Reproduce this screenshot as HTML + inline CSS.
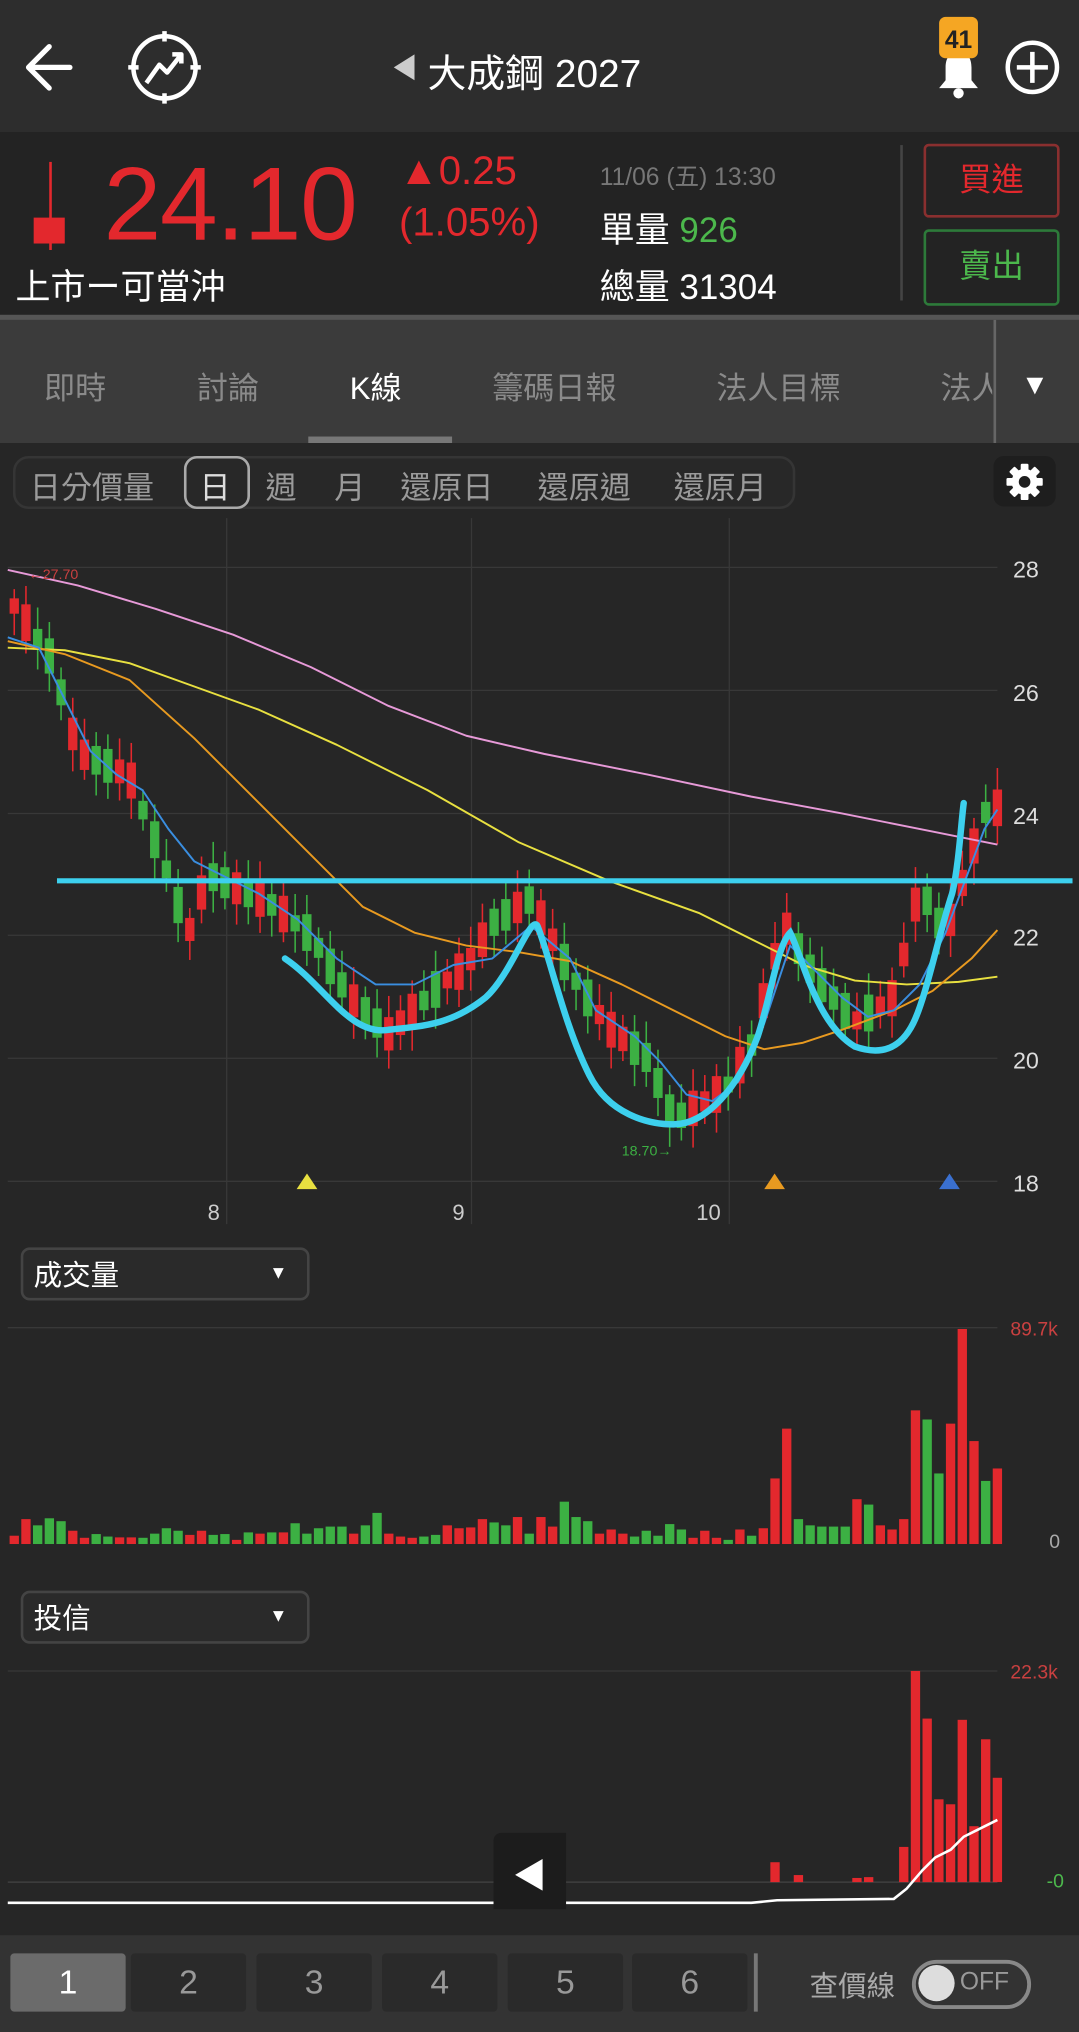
<!DOCTYPE html>
<html><head><meta charset="utf-8">
<style>
html,body{margin:0;padding:0;background:#262626;overflow:hidden;}
body{width:1079px;height:2032px;}
#w{position:absolute;left:0;top:0;width:833px;height:1569px;transform:scale(1.29532);transform-origin:0 0;background:#262626;font-family:"Liberation Sans","Noto Sans CJK TC",sans-serif;color:#fff;}
.a{position:absolute;}
.tab{position:absolute;top:280px;font-size:24px;color:#8a8a8a;}
.sub{position:absolute;top:357px;font-size:24px;color:#9a9a9a;}
.nb{position:absolute;top:1508px;width:89px;height:45px;background:#2a2a2a;border-radius:3px;color:#999;font-size:26px;text-align:center;line-height:45px;}
</style></head><body><div id="w">
<div class="a" style="left:0;top:0;width:833px;height:102px;background:#2d2d2d"></div>
<svg class="a" style="left:0;top:0" width="833" height="102">
<path d="M54 52H22M38 36L22 52L38 68" stroke="#fff" stroke-width="4" fill="none" stroke-linecap="round" stroke-linejoin="round"/>
<circle cx="127" cy="52" r="24" stroke="#fff" stroke-width="3.5" fill="none"/>
<path d="M127 24v8M127 72v8M99 52h8M147 52h8" stroke="#fff" stroke-width="3.5"/>
<path d="M113 64L123 50L129 56L140 42M133 42h7v7" stroke="#fff" stroke-width="3.5" fill="none" stroke-linejoin="round"/>
<path d="M320 42L304 52L320 62Z" fill="#ccc"/>
<path d="M740 40c-7 0-10 5-10 12v10l-5 6h30l-5-6V52c0-7-3-12-10-12z" fill="#fff"/>
<circle cx="740" cy="72" r="4" fill="#fff"/>
<rect x="725" y="13" width="30" height="32" rx="5" fill="#f5a623"/>
<text x="740" y="37" font-size="19" font-weight="bold" text-anchor="middle" fill="#222" font-family="Liberation Sans">41</text>
<circle cx="797" cy="52" r="19" stroke="#fff" stroke-width="3.5" fill="none"/>
<path d="M797 40v24M785 52h24" stroke="#fff" stroke-width="3.5"/>
</svg>
<div class="a" style="left:330px;top:32px;font-size:30px;">大成鋼 2027</div>
<div class="a" style="left:0;top:102px;width:833px;height:142px;background:#232323"></div>
<div class="a" style="left:0;top:243px;width:833px;height:4px;background:#555"></div>
<div class="a" style="left:38px;top:125px;width:2px;height:68px;background:#e3282d"></div>
<div class="a" style="left:26px;top:168px;width:24px;height:20px;background:#e3282d"></div>
<div class="a" style="left:80px;top:112px;font-size:80px;color:#e3282d;letter-spacing:-1px">24.10</div>
<div class="a" style="left:308px;top:114px;font-size:31px;color:#e3282d">▲0.25</div>
<div class="a" style="left:308px;top:154px;font-size:31px;color:#e3282d">(1.05%)</div>
<div class="a" style="left:12px;top:200px;font-size:27px;">上市ー可當沖</div>
<div class="a" style="left:463px;top:122px;font-size:19px;color:#777">11/06 (五) 13:30</div>
<div class="a" style="left:463px;top:156px;font-size:27px;">單量 <span style="color:#4cb84c">926</span></div>
<div class="a" style="left:463px;top:200px;font-size:27px;">總量 31304</div>
<div class="a" style="left:695px;top:112px;width:2px;height:120px;background:#444"></div>
<div class="a" style="left:713px;top:111px;width:101px;height:53px;border:2px solid #8a2f2f;border-radius:4px;color:#e3282d;font-size:25px;text-align:center;line-height:53px">買進</div>
<div class="a" style="left:713px;top:177px;width:101px;height:55px;border:2px solid #2d7a3a;border-radius:4px;color:#4cb84c;font-size:25px;text-align:center;line-height:55px">賣出</div>
<div class="a" style="left:0;top:247px;width:833px;height:95px;background:#3b3b3b"></div>
<div class="tab" style="left:34px">即時</div>
<div class="tab" style="left:152px">討論</div>
<div class="tab" style="left:270px;color:#fff">K線</div>
<div class="tab" style="left:380px">籌碼日報</div>
<div class="tab" style="left:553px">法人目標</div>
<div class="tab" style="left:726px;width:40px;overflow:hidden;white-space:nowrap">法人</div>
<div class="a" style="left:767px;top:247px;width:2px;height:95px;background:#666"></div>
<div class="a" style="left:788px;top:284px;font-size:22px;color:#fff">▼</div>
<div class="a" style="left:238px;top:337px;width:111px;height:5px;background:#777"></div>
<div class="a" style="left:10px;top:352px;width:600px;height:37px;border:2px solid #353535;border-radius:12px;background:#282828"></div>
<div class="a" style="left:142px;top:352px;width:47px;height:37px;border:2px solid #aaa;border-radius:10px"></div>
<div class="sub" style="left:23px">日分價量</div>
<div class="sub" style="left:154px;color:#ddd">日</div>
<div class="sub" style="left:205px">週</div>
<div class="sub" style="left:258px">月</div>
<div class="sub" style="left:309px">還原日</div>
<div class="sub" style="left:415px">還原週</div>
<div class="sub" style="left:520px">還原月</div>
<div class="a" style="left:767px;top:352px;width:48px;height:39px;background:#1e1e1e;border-radius:8px"></div>
<svg class="a" style="left:776px;top:357px" width="30" height="30" viewBox="0 0 30 30"><g fill="#fff"><circle cx="15" cy="15" r="10"/><g id="t"><rect x="12" y="1" width="6" height="28" rx="1"/></g><use href="#t" transform="rotate(45 15 15)"/><use href="#t" transform="rotate(90 15 15)"/><use href="#t" transform="rotate(135 15 15)"/></g><circle cx="15" cy="15" r="4.5" fill="#1e1e1e"/></svg>

<svg id="ch" class="a" style="left:0;top:0" width="833" height="1569"></svg>

<div class="a" style="left:16px;top:963px;width:219px;height:37px;border:2px solid #444;border-radius:7px;background:#2a2a2a"></div>
<div class="a" style="left:26px;top:967px;font-size:22px">成交量</div>
<div class="a" style="left:208px;top:974px;font-size:14px">▼</div>
<div class="a" style="left:16px;top:1228px;width:219px;height:37px;border:2px solid #444;border-radius:7px;background:#2a2a2a"></div>
<div class="a" style="left:26px;top:1232px;font-size:22px">投信</div>
<div class="a" style="left:208px;top:1239px;font-size:14px">▼</div>
<div class="a" style="left:780px;top:1018px;font-size:15px;color:#c94040">89.7k</div>
<div class="a" style="left:810px;top:1182px;font-size:15px;color:#aaa">0</div>
<div class="a" style="left:780px;top:1283px;font-size:15px;color:#c94040">22.3k</div>
<div class="a" style="left:808px;top:1444px;font-size:15px;color:#4cb84c">-0</div>
<div class="a" style="left:381px;top:1415px;width:56px;height:59px;background:#1c1c1c;border-radius:6px 0 0 0"></div>
<div class="a" style="left:396px;top:1428px;font-size:26px">◀</div>
<div class="a" style="left:0;top:1494px;width:833px;height:75px;background:#333"></div>
<div class="nb" style="left:8px;background:#6b6b6b;color:#fff">1</div>
<div class="nb" style="left:101px">2</div>
<div class="nb" style="left:198px">3</div>
<div class="nb" style="left:295px">4</div>
<div class="nb" style="left:392px">5</div>
<div class="nb" style="left:488px">6</div>
<div class="a" style="left:582px;top:1508px;width:3px;height:45px;background:#777"></div>
<div class="a" style="left:625px;top:1516px;font-size:22px;color:#aaa">查價線</div>
<div class="a" style="left:704px;top:1513px;width:86px;height:32px;border:3px solid #888;border-radius:20px"></div>
<div class="a" style="left:709px;top:1517px;width:28px;height:28px;border-radius:50%;background:#ddd"></div>
<div class="a" style="left:741px;top:1520px;font-size:19px;color:#999">OFF</div>
</div>
<script>
var s='',ch=document.getElementById('ch');
function L(x1,y1,x2,y2,c,w){s+='<line x1="'+x1+'" y1="'+y1+'" x2="'+x2+'" y2="'+y2+'" stroke="'+c+'" stroke-width="'+(w||1)+'"/>';}
function R(x,y,w,h,c){s+='<rect x="'+x+'" y="'+y+'" width="'+w+'" height="'+h+'" fill="'+c+'"/>';}
function T(x,y,t,c,sz,a){s+='<text x="'+x+'" y="'+y+'" fill="'+c+'" font-size="'+sz+'" text-anchor="'+(a||'start')+'" font-family="Liberation Sans">'+t+'</text>';}
[438,533,628,722,817,912].forEach(function(y,i){L(6,y,770,y,'#383838');T(782,y+8,28-2*i,'#ddd',18);});
[175,364,563].forEach(function(x){L(x,400,x,945,'#383838');});
T(165,942,'8','#ccc',17,'middle');T(354,942,'9','#ccc',17,'middle');T(547,942,'10','#ccc',17,'middle');
L(6,1025,770,1025,'#383838');L(6,1290,770,1290,'#383838');L(6,1453,770,1453,'#444');
function py(p){return 438+(28-p)*47.4;}
var kp=[[10,27.4],[40,26.5],[60,25],[100,24.6],[130,23],[145,22],[160,23],[210,22.5],[240,22],[270,21],[300,20.4],[340,21.2],[360,21.5],[380,22.2],[410,22.6],[440,21.4],[470,20.5],[500,20],[520,19],[560,19.5],[580,20.2],[605,22.2],[630,21.3],[660,20.6],[690,21],[710,22.8],[730,22],[760,24],[772,24.1]];
function ip(x){for(var i=1;i<kp.length;i++)if(x<=kp[i][0]){var a=kp[i-1],b=kp[i];return a[1]+(b[1]-a[1])*(x-a[0])/(b[0]-a[0]);}return 24.1;}
var vol=[[20,'r'],[60,'r'],[45,'g'],[62,'g'],[55,'g'],[32,'r'],[15,'r'],[24,'g'],[18,'g'],[16,'r'],[16,'r'],[15,'g'],[25,'g'],[38,'g'],[32,'g'],[22,'r'],[32,'r'],[22,'g'],[24,'g'],[10,'r'],[28,'g'],[25,'r'],[28,'g'],[28,'r'],[50,'g'],[25,'g'],[38,'g'],[42,'g'],[42,'g'],[25,'r'],[45,'g'],[75,'g'],[25,'r'],[18,'r'],[15,'r'],[18,'g'],[22,'g'],[45,'r'],[38,'r'],[40,'r'],[60,'r'],[52,'g'],[45,'g'],[65,'r'],[25,'g'],[65,'r'],[42,'r'],[102,'g'],[65,'g'],[55,'g'],[25,'r'],[35,'r'],[25,'r'],[18,'g'],[32,'g'],[20,'g'],[48,'g'],[35,'g'],[15,'r'],[32,'r'],[15,'r'],[10,'g'],[35,'r'],[20,'g'],[38,'r'],[158,'r'],[278,'r'],[60,'g'],[45,'g'],[42,'g'],[42,'g'],[42,'g'],[108,'r'],[95,'g'],[45,'r'],[35,'r'],[60,'r'],[322,'r'],[300,'g'],[170,'g'],[290,'r'],[518,'r'],[248,'r'],[152,'g'],[182,'r']];
var n=vol.length,st=(770-11)/(n-1);
var tx={65:48,67:17,72:10,73:12,76:85,77:510,78:395,79:200,80:188,81:392,82:135,83:345,84:252};
for(var i=0;i<n;i++){
 var x=11+i*st,c=vol[i][1]=='r'?'#e3282d':'#3cb043';
 var h=vol[i][0]/518*166;R(x-3.6,1192-h,7.2,h,c);
 if(tx[i]){var hh=tx[i]/510*163;R(x-3.6,1453-hh,7.2,hh,'#e3282d');}
 var p=ip(x),d=0.25+0.35*Math.abs(Math.sin(i*1.7)),o,cl;
 if(c=='#e3282d'){o=p-d/2;cl=p+d/2;}else{o=p+d/2;cl=p-d/2;}
 var hi=Math.max(o,cl)+0.15+0.2*Math.abs(Math.sin(i*2.3)),lo=Math.min(o,cl)-0.15-0.2*Math.abs(Math.cos(i*1.3));
 L(x,py(hi),x,py(lo),c,1.2);var yt=py(Math.max(o,cl));R(x-3.6,yt,7.2,Math.max(2,py(Math.min(o,cl))-yt),c);
}
function P(pts,c,w){s+='<polyline points="'+pts+'" fill="none" stroke="'+c+'" stroke-width="'+(w||1.5)+'" stroke-linejoin="round"/>';}
P('6,440 60,452 120,470 180,490 240,515 300,545 360,568 420,582 500,598 580,615 650,628 720,642 770,652','#e79ad8');
P('6,500 50,502 100,512 150,530 200,548 260,575 330,610 400,650 470,680 540,705 580,725 620,745 660,757 700,760 740,758 770,754','#e8e040');
P('6,495 50,505 100,525 150,570 200,620 240,660 280,700 320,720 360,730 400,735 440,742 480,760 520,780 560,800 590,810 620,805 650,795 690,780 720,765 750,740 770,718','#e89a20');
P('6,492 30,500 50,540 70,580 90,598 110,610 130,640 150,665 170,675 200,690 230,710 260,740 290,760 320,760 350,745 380,740 410,715 440,740 460,780 490,800 510,820 530,845 550,850 570,835 590,790 610,730 630,750 650,770 670,785 690,780 710,760 730,720 760,640 770,625','#3a8ee0');
L(44,680,828,680,'#3dd0ee',4);
s+='<path d="M220 740C250 760 270 800 300 795C330 792 350 790 375 770C395 752 410 705 415 715C425 740 435 790 455 830C470 860 500 868 520 868C545 868 570 840 585 800C595 770 600 730 610 720C620 740 630 790 660 808C680 815 695 810 705 790C715 770 725 720 735 690C740 670 742 635 744 620" fill="none" stroke="#3dd0ee" stroke-width="5" stroke-linecap="round"/>';
T(22,447,'←27.70','#c94040',11);T(480,892,'18.70→','#3cb043',11);
s+='<path d="M229 918l8-12 8 12z" fill="#e8e040"/><path d="M590 918l8-12 8 12z" fill="#e89a20"/><path d="M725 918l8-12 8 12z" fill="#3a70d0"/>';
P('6,1469 580,1469 600,1467 690,1466 700,1458 712,1444 722,1434 734,1428 744,1418 752,1414 770,1405','#fff',2);
ch.innerHTML=s;
</script>
</body></html>
